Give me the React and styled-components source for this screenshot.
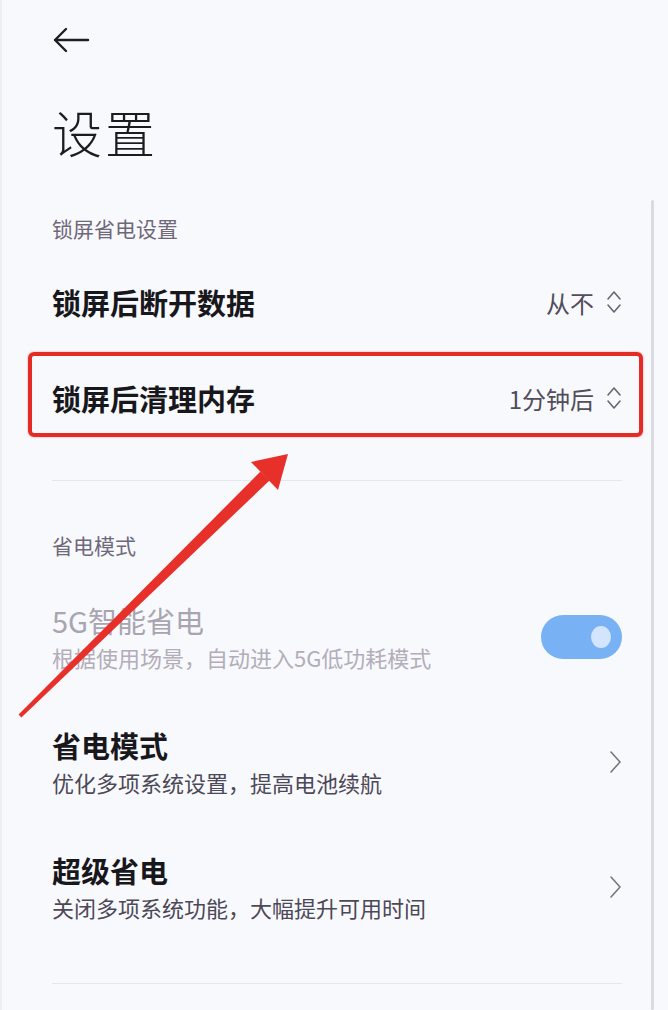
import React from 'react';
import styled, { createGlobalStyle } from 'styled-components';

const GlobalStyle = createGlobalStyle`
  html, body {
    margin: 0;
    padding: 0;
    background: #f8f9fd;
  }
  body {
    font-family: "Noto Sans CJK SC", "Noto Sans", sans-serif;
  }
`;

const Page = styled.div`
  position: relative;
  width: 668px;
  height: 1010px;
  overflow: hidden;
  box-sizing: border-box;
  background: #f8f9fd;
  border-left: 2px solid #eceef3;
  padding: 0 46px 0 50px;
`;

const TopBar = styled.div`
  height: 80px;
  display: flex;
  align-items: center;
`;

const Title = styled.h1`
  margin: 21px 0 0;
  font-size: 50px;
  line-height: 60px;
  font-weight: 300;
  color: #1c1b22;
  letter-spacing: 3px;
`;

const SectionLabel = styled.div`
  margin-top: ${p => p.top}px;
  font-size: 21px;
  line-height: 30px;
  color: #6e6879;
`;

const Row = styled.div`
  position: relative;
  height: ${p => p.h}px;
  display: flex;
  align-items: center;
  justify-content: space-between;
  margin-top: ${p => p.top || 0}px;
`;

const TextBlock = styled.div`
  display: flex;
  flex-direction: column;
  gap: 4px;
`;

const RowTitle = styled.div`
  font-size: 29px;
  line-height: 36px;
  font-weight: ${p => (p.dim ? 400 : 700)};
  color: ${p => (p.dim ? '#a9a5b0' : '#18171c')};
`;

const RowSub = styled.div`
  font-size: 22px;
  line-height: 30px;
  color: ${p => (p.dim ? '#b2adb9' : '#4d4856')};
`;

const Value = styled.div`
  display: flex;
  align-items: center;
  gap: 12px;
  font-size: 24px;
  color: #524c5b;
`;

const Highlight = styled.div`
  position: absolute;
  left: -24px;
  right: -21px;
  top: 2px;
  bottom: 9px;
  border: 4px solid #e42b24;
  border-radius: 6px;
  box-shadow: 0 0 2px rgba(228, 43, 36, 0.5);
  pointer-events: none;
`;

const Divider = styled.div`
  margin-top: ${p => p.top}px;
  height: 1px;
  background: #e5e7ed;
`;

const Toggle = styled.div`
  width: 81px;
  height: 44px;
  border-radius: 22px;
  background: #78b1f4;
  display: flex;
  align-items: center;
  justify-content: flex-end;
  padding-right: 11px;
  box-sizing: border-box;
`;

const Knob = styled.div`
  width: 20px;
  height: 22px;
  border-radius: 50%;
  background: #d3e5fc;
`;

const Scrollbar = styled.div`
  position: absolute;
  right: 14px;
  top: 200px;
  bottom: 0;
  width: 3px;
  border-radius: 2px;
  background: #d9dbe1;
`;

const Annotation = styled.svg`
  position: absolute;
  left: 0;
  top: 0;
  pointer-events: none;
`;

const BackArrow = () => (
  <svg width="38" height="26" viewBox="0 0 38 26" fill="none">
    <path d="M36 13H3M14 2L3 13l11 11" stroke="#1f1e24" strokeWidth="2.4" strokeLinecap="round" strokeLinejoin="round" />
  </svg>
);

const UpDown = () => (
  <svg width="16" height="26" viewBox="0 0 16 26" fill="none">
    <path d="M2 10l6-7 6 7M2 16l6 7 6-7" stroke="#6b6574" strokeWidth="1.6" strokeLinecap="round" strokeLinejoin="round" />
  </svg>
);

const ChevronRight = () => (
  <svg width="14" height="26" viewBox="0 0 14 26" fill="none">
    <path d="M3 3l9 10-9 10" stroke="#7a7482" strokeWidth="1.6" strokeLinecap="round" strokeLinejoin="round" />
  </svg>
);

function SelectRow({ title, value, top, highlighted }) {
  return (
    <Row h={96} top={top}>
      <RowTitle>{title}</RowTitle>
      <Value>
        {value}
        <UpDown />
      </Value>
      {highlighted && <Highlight />}
    </Row>
  );
}

function DetailRow({ title, sub, top, dim, children }) {
  return (
    <Row h={125} top={top}>
      <TextBlock>
        <RowTitle dim={dim}>{title}</RowTitle>
        <RowSub dim={dim}>{sub}</RowSub>
      </TextBlock>
      {children}
    </Row>
  );
}

export default function App() {
  return (
    <>
      <GlobalStyle />
      <Page>
        <TopBar>
          <BackArrow />
        </TopBar>
        <Title>设置</Title>

        <SectionLabel top={52}>锁屏省电设置</SectionLabel>
        <SelectRow title="锁屏后断开数据" value="从不" top={11} />
        <SelectRow title="锁屏后清理内存" value="1分钟后" highlighted />

        <Divider top={34} />

        <SectionLabel top={49}>省电模式</SectionLabel>
        <DetailRow title="5G智能省电" sub="根据使用场景，自动进入5G低功耗模式" top={14} dim>
          <Toggle>
            <Knob />
          </Toggle>
        </DetailRow>
        <DetailRow title="省电模式" sub="优化多项系统设置，提高电池续航">
          <ChevronRight />
        </DetailRow>
        <DetailRow title="超级省电" sub="关闭多项系统功能，大幅提升可用时间">
          <ChevronRight />
        </DetailRow>

        <Divider top={34} />

        <Scrollbar />

        {/* red pointer drawn over the list */}
        <Annotation width="668" height="1010" viewBox="0 0 668 1010">
          <polygon
            points="16.6,714.6 19.4,717.4 267.5,480.5 258.5,471.5"
            fill="#e8302a"
          />
          <polygon points="286,454 249,462 276,490" fill="#e8302a" />
        </Annotation>
      </Page>
    </>
  );
}
